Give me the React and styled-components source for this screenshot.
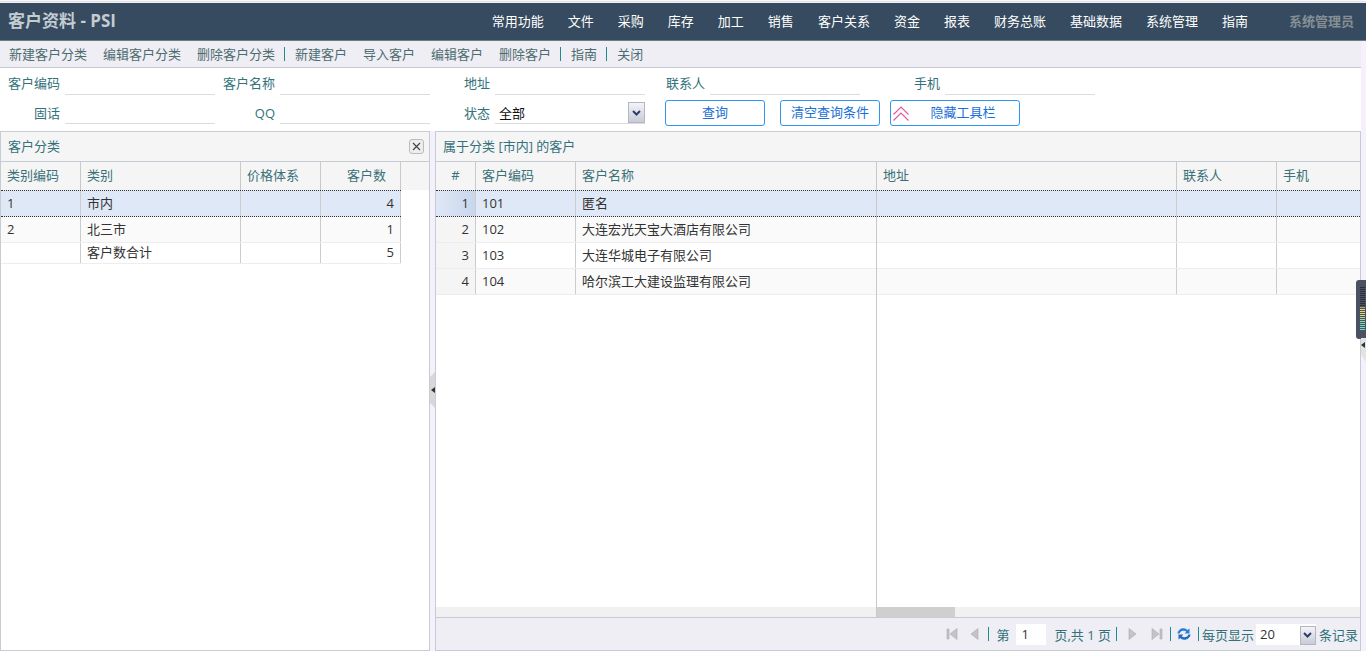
import React from "react";
import styled, { createGlobalStyle } from "styled-components";

const Global = createGlobalStyle`
  html, body { margin: 0; padding: 0; height: 100%; overflow: hidden; background: #f5f0fc; }
  body { font-family: "Open Sans", "Noto Sans CJK SC", "Noto Sans", sans-serif; font-size: 13px; color: #333; }
  * { box-sizing: border-box; }
`;

const Page = styled.div`
  position: relative; width: 1366px; height: 651px; display: flex; flex-direction: column; overflow: hidden;
`;
const TopStrip = styled.div`
  height: 3px; flex: none; background: #f4f4f6; border-top: 1px solid #f7f7f8; border-bottom: 1px solid #f0f0f2;
  box-shadow: inset 0 0 0 1px #e3e3e8;
`;
const Header = styled.header`
  height: 38px; flex: none; background: #364b60; display: flex; align-items: center; padding: 0 12px 2px 8px;
  border-bottom: 1px solid #6d7c8a;
`;
const Title = styled.div`
  font-size: 17px; font-weight: 700; color: #c4ccd2; flex: 1; line-height: 20px;
`;
const Menu = styled.nav`display: flex; gap: 24px; margin-right: 41px;`;
const MenuItem = styled.span`color: #fff; line-height: 18px; white-space: nowrap;`;
const UserName = styled.span`color: #868f96; font-weight: 700; white-space: nowrap;`;

const Content = styled.div`width: 1361px; flex: 1; display: flex; flex-direction: column; min-height: 0;`;

const Toolbar = styled.div`
  height: 27px; flex: none; background: #eeeef4; border-bottom: 1px solid #c8c8d0;
  display: flex; align-items: center; padding: 0 0 2px 9px;
`;
const ToolItem = styled.span`color: #4e6c70; white-space: nowrap; margin-right: ${p => (p.$tight ? 0 : 16)}px;`;
const ToolSep = styled.i`width: 1px; height: 14px; background: #1f8a8e; margin: 2px 10px 0 9px; flex: none;`;

const Form = styled.div`
  height: 63px; flex: none; background: #fff; display: flex; flex-direction: column; padding-top: 1px;
`;
const FormRow = styled.div`height: 29px; display: flex; align-items: stretch;`;
const Field = styled.div`display: flex; align-items: stretch;`;
const Label = styled.label`
  width: ${p => p.$w || 60}px; text-align: right; color: #33727a; line-height: ${p => p.$lh || 28}px; margin-right: 5px; white-space: nowrap;
`;
const TextBox = styled.div`
  width: 150px; height: 25px; border-bottom: 1px solid #dcdcdc; background: #fff; margin-top: 1px;
`;
const ComboBox = styled.div`
  width: 150px; height: 25px; margin-top: 1px; position: relative; display: flex; align-items: center;
  border-bottom: 1px solid #dcdcdc; padding: 2px 0 0 4px; color: #111;
`;
const ComboArrow = styled.span`
  position: absolute; right: 0; top: 3px; width: 17px; height: 21px; border: 1px solid #b4b6c8;
  background: linear-gradient(#f3f4f7, #c9cbd6); display: flex; align-items: center; justify-content: center;
`;
const Btn = styled.button`
  width: ${p => p.$w}px; height: 26px; margin: 2px 0 0 ${p => p.$ml}px; border: 1px solid #2f95f0; border-radius: 3px;
  background: #fff; color: #1a6fd8; font: inherit; padding: 0 0 3px ${p => p.$pl || 0}px; display: flex; align-items: center; justify-content: center;
  position: relative; align-self: flex-start;
`;
const BtnIcon = styled.svg`position: absolute; left: 2px; top: 5px;`;

const Panels = styled.div`flex: 1; display: flex; min-height: 0;`;
const Panel = styled.section`
  width: ${p => p.$w}px; flex: ${p => (p.$grow ? 1 : "none")}; display: flex; flex-direction: column; background: #fff;
  border: 1px solid #c5ccd3; min-width: 0; overflow: hidden;
`;
const PanelTitle = styled.div`
  height: 30px; flex: none; background: #f5f5f5; border-bottom: 1px solid #c5ccd3; display: flex; align-items: center;
  justify-content: space-between; padding: 0 5px 2px 7px; color: #33727a;
`;
const CloseBtn = styled.span`
  width: 15px; height: 15px; border: 1px solid #bbb; border-radius: 3px; background: #eee; margin-top: 2px;
  display: flex; align-items: center; justify-content: center;
`;
const Splitter = styled.div`width: 5px; flex: none; display: flex; align-items: center; padding-bottom: 2px;`;
const SplitHandle = styled.div`
  width: 5px; height: 36px; background: #d8d8d8; display: flex; align-items: center; justify-content: center;
  clip-path: polygon(0 5px, 100% 0, 100% 100%, 0 calc(100% - 5px)); color: #333;
`;

const GridArea = styled.div`flex: 1; display: flex; min-height: 0;`;
const Pane = styled.div`
  display: flex; flex-direction: column; width: ${p => (p.$w ? `${p.$w}px` : "auto")}; flex: ${p => (p.$w ? "none" : 1)};
  border-right: ${p => (p.$line ? "1px solid #c8c8c8" : "none")}; min-width: 0; overflow: hidden;
`;
const HeadRow = styled.div`
  display: flex; height: 28px; flex: none; background: #f5f5f5;
`;
const HeadCell = styled.div`
  width: ${p => p.$w}px; flex: ${p => (p.$grow ? 1 : "none")}; border-right: ${p => (p.$noline ? "none" : "1px solid #c6cacd")};
  padding: 0 ${p => p.$pr || 6}px 0 6px; line-height: 26px; color: #3a7177; text-align: ${p => p.$align || "left"}; white-space: nowrap; overflow: hidden;
`;
const Row = styled.div`
  display: flex; flex: none; height: ${p => (p.$sel ? 27 : p.$h || 26)}px; width: ${p => (p.$wd ? `${p.$wd}px` : "auto")};
  background: ${p => (p.$sel ? "#dfe8f6" : p.$alt ? "#fafafa" : "#fff")};
  border-bottom: ${p => (p.$sel ? "1px dotted #333" : "1px solid #ededed")};
  ${p => p.$sel && "border-top: 1px dotted #333;"}
`;
const Cell = styled.div`
  width: ${p => p.$w}px; flex: ${p => (p.$grow ? 1 : "none")}; border-right: ${p => (p.$noline ? "none" : "1px solid #cccccc")};
  padding: 0 6px; line-height: ${p => p.$lh || 25}px; color: #333; text-align: ${p => p.$align || "left"}; white-space: nowrap;
`;
const NumCell = styled(Cell)`
  background: ${p => (p.$sel ? "linear-gradient(90deg, #dfe8f6, #c8d6ec)" : "#f5f5f5")};
`;
const Spacer = styled.div`flex: 1;`;
const HScroll = styled.div`height: 10px; flex: none; background: #f1f1f1; display: flex;`;
const HThumb = styled.div`width: 78px; background: #cfcfcf;`;

const Pager = styled.div`
  height: 33px; flex: none; background: #eeeef4; border-top: 1px solid #c5ccd3; display: flex; align-items: center;
  justify-content: flex-end; padding-right: 2px; color: #33727a;
`;
const PagerIcon = styled.svg`flex: none; margin: ${p => p.$m || "0"};`;
const PagerSep = styled.i`width: 1px; height: 14px; background: #1f8a8e; flex: none; margin: ${p => p.$m || "0 7px"};`;
const PageInput = styled.div`
  width: 30px; height: 21px; background: #fff; color: #333; line-height: 21px; padding-left: 5px; margin: 0 8px 0 7px; flex: none;
`;
const SizeCombo = styled.div`
  width: 60px; height: 21px; background: #fff; position: relative; color: #333; line-height: 21px; padding-left: 4px; margin: 0 3px 0 2px; flex: none;
`;
const SizeArrow = styled(ComboArrow)`top: 2px; width: 16px; height: 19px;`;

const DockWidget = styled.div`
  position: absolute; left: 1356px; top: 280px; width: 10px; height: 59px; background: #4a5163; border-radius: 3px 0 0 3px;
  padding: 7px 0 0 4px; display: flex; flex-direction: column; gap: 1px;
`;
const Tick = styled.i`display: block; height: 1px; width: 5px; background: ${p => p.$c};`;
const DockTab = styled.div`
  position: absolute; left: 1361px; top: 338px; width: 5px; height: 24px; background: #e3e3e3; padding-top: 4px;
  clip-path: polygon(0 0, 100% 0, 100% 100%, 0 70%); display: flex; align-items: flex-start;
`;

const Chevron = () => (
  <svg width="9" height="6" viewBox="0 0 9 6"><path d="M1 1l3.5 3.5L8 1" fill="none" stroke="#2b3f6b" strokeWidth="2" /></svg>
);
const leftArrow = <svg width="4" height="6" viewBox="0 0 4 6"><path d="M4 0v6L0 3z" fill="#333" /></svg>;

const menu = ["常用功能", "文件", "采购", "库存", "加工", "销售", "客户关系", "资金", "报表", "财务总账", "基础数据", "系统管理", "指南"];

const catCols = [80, 160, 80, 80];
const lockCols = [40, 100, 300];
const freeCols = [300, 100];

const customers = [
  ["1", "101", "匿名"],
  ["2", "102", "大连宏光天宝大酒店有限公司"],
  ["3", "103", "大连华城电子有限公司"],
  ["4", "104", "哈尔滨工大建设监理有限公司"],
];

const dockTicks = [
  ...Array(10).fill("#2c303b"),
  "#b8a95e", "#e6d77a", "#e6d77a", "#e6d77a", "#dcd67f",
  "#b9d88a", "#9fd99a", "#8edba6", "#7ed8b0",
  "#6fdcc0", "#6ee0c8", "#6ee0c8",
];

const iconFill = { fill: "#c2c4c8", stroke: "#a9abb0", strokeWidth: ".6" };
const First = () => <PagerIcon width="14" height="14" viewBox="0 0 14 14"><path d="M2 2h2v10H2zM12 1.5v11L5 7z" {...iconFill} /></PagerIcon>;
const Prev = () => <PagerIcon $m="0 0 0 10px" width="12" height="14" viewBox="0 0 12 14"><path d="M9 1.5v11L2 7z" {...iconFill} /></PagerIcon>;
const Next = () => <PagerIcon width="12" height="14" viewBox="0 0 12 14"><path d="M3 1.5v11L10 7z" {...iconFill} /></PagerIcon>;
const Last = () => <PagerIcon $m="0 0 0 12px" width="14" height="14" viewBox="0 0 14 14"><path d="M10 2h2v10h-2zM2 1.5v11L9 7z" {...iconFill} /></PagerIcon>;
const Refresh = () => (
  <PagerIcon width="16" height="16" viewBox="0 0 16 16">
    <path d="M1.5 7.5C2 4 5 2 8 2.3c1.6.2 2.8.9 3.6 1.8L13.5 2.5V7.5H8.6l1.7-1.7C9.6 5 8.6 4.6 7.5 4.7 5.6 4.8 4 6 3.6 7.5z" fill="#2a7fd6" />
    <path d="M14.5 8.5C14 12 11 14 8 13.7c-1.6-.2-2.8-.9-3.6-1.8L2.5 13.5V8.5h4.9L5.7 10.2c.7.8 1.7 1.2 2.8 1.1 1.9-.1 3.5-1.3 3.9-2.8z" fill="#1f6cc0" />
  </PagerIcon>
);

export default function App() {
  return (
    <Page>
      <Global />
      <TopStrip />
      <Header>
        <Title>客户资料 - PSI</Title>
        <Menu>{menu.map(m => <MenuItem key={m}>{m}</MenuItem>)}</Menu>
        <UserName>系统管理员</UserName>
      </Header>
      <Content>
        <Toolbar>
          <ToolItem>新建客户分类</ToolItem>
          <ToolItem>编辑客户分类</ToolItem>
          <ToolItem $tight>删除客户分类</ToolItem>
          <ToolSep />
          <ToolItem>新建客户</ToolItem>
          <ToolItem>导入客户</ToolItem>
          <ToolItem>编辑客户</ToolItem>
          <ToolItem $tight>删除客户</ToolItem>
          <ToolSep />
          <ToolItem $tight>指南</ToolItem>
          <ToolSep />
          <ToolItem $tight>关闭</ToolItem>
        </Toolbar>
        <Form>
          <FormRow>
            <Field><Label>客户编码</Label><TextBox /></Field>
            <Field><Label>客户名称</Label><TextBox /></Field>
            <Field><Label>地址</Label><TextBox /></Field>
            <Field><Label>联系人</Label><TextBox /></Field>
            <Field><Label $w={80}>手机</Label><TextBox /></Field>
          </FormRow>
          <FormRow>
            <Field><Label $lh={30}>固话</Label><TextBox /></Field>
            <Field><Label $lh={30}>QQ</Label><TextBox /></Field>
            <Field>
              <Label $lh={30}>状态</Label>
              <ComboBox>全部<ComboArrow><Chevron /></ComboArrow></ComboBox>
            </Field>
            <Btn $w={100} $ml={20}>查询</Btn>
            <Btn $w={100} $ml={15}>清空查询条件</Btn>
            <Btn $w={130} $ml={10} $pl={16}>
              <BtnIcon width="16" height="15" viewBox="0 0 16 15">
                <path d="M.5 8.5L8 1l7.5 7.5M.5 14.5L8 7l7.5 7.5" fill="none" stroke="#e0559a" strokeWidth="1.1" />
              </BtnIcon>
              隐藏工具栏
            </Btn>
          </FormRow>
        </Form>
        <Panels>
          <Panel $w={430}>
            <PanelTitle>
              客户分类
              <CloseBtn>
                <svg width="9" height="9" viewBox="0 0 9 9"><path d="M1 1l7 7M8 1L1 8" stroke="#444" strokeWidth="1.2" /></svg>
              </CloseBtn>
            </PanelTitle>
            <HeadRow>
              <HeadCell $w={catCols[0]}>类别编码</HeadCell>
              <HeadCell $w={catCols[1]}>类别</HeadCell>
              <HeadCell $w={catCols[2]}>价格体系</HeadCell>
              <HeadCell $w={catCols[3]} $align="right" $pr={14}>客户数</HeadCell>
              <HeadCell $grow $noline />
            </HeadRow>
            <Row $sel $wd={400}>
              <Cell $w={80}>1</Cell><Cell $w={160}>市内</Cell><Cell $w={80} /><Cell $w={80} $align="right">4</Cell>
            </Row>
            <Row $alt $wd={400}>
              <Cell $w={80}>2</Cell><Cell $w={160}>北三市</Cell><Cell $w={80} /><Cell $w={80} $align="right">1</Cell>
            </Row>
            <Row $h={21} $wd={400}>
              <Cell $w={80} /><Cell $w={160} $lh={18}>客户数合计</Cell><Cell $w={80} /><Cell $w={80} $align="right" $lh={18}>5</Cell>
            </Row>
          </Panel>
          <Splitter><SplitHandle>{leftArrow}</SplitHandle></Splitter>
          <Panel $grow>
            <PanelTitle>属于分类 [市内] 的客户</PanelTitle>
            <GridArea>
              <Pane $w={441} $line>
                <HeadRow>
                  <HeadCell $w={lockCols[0]} $align="center">#</HeadCell>
                  <HeadCell $w={lockCols[1]}>客户编码</HeadCell>
                  <HeadCell $w={lockCols[2]} $noline>客户名称</HeadCell>
                </HeadRow>
                {customers.map((c, i) => (
                  <Row key={c[0]} $sel={i === 0} $alt={i % 2 === 1}>
                    <NumCell $w={lockCols[0]} $align="right" $sel={i === 0}>{c[0]}</NumCell>
                    <Cell $w={lockCols[1]}>{c[1]}</Cell>
                    <Cell $w={lockCols[2]} $noline>{c[2]}</Cell>
                  </Row>
                ))}
                <Spacer />
                <HScroll />
              </Pane>
              <Pane>
                <HeadRow>
                  <HeadCell $w={freeCols[0]}>地址</HeadCell>
                  <HeadCell $w={freeCols[1]}>联系人</HeadCell>
                  <HeadCell $grow $noline>手机</HeadCell>
                </HeadRow>
                {customers.map((c, i) => (
                  <Row key={c[0]} $sel={i === 0} $alt={i % 2 === 1}>
                    <Cell $w={freeCols[0]} />
                    <Cell $w={freeCols[1]} />
                    <Cell $grow $noline />
                  </Row>
                ))}
                <Spacer />
                <HScroll><HThumb /></HScroll>
              </Pane>
            </GridArea>
            <Pager>
              <First /><Prev />
              <PagerSep $m="0 7px 0 7px" />
              第
              <PageInput>1</PageInput>
              页,共 1 页
              <PagerSep $m="0 9px 0 5px" />
              <Next /><Last />
              <PagerSep $m="0 5px 0 6px" />
              <Refresh />
              <PagerSep $m="0 3px 0 6px" />
              每页显示
              <SizeCombo>20<SizeArrow><Chevron /></SizeArrow></SizeCombo>
              条记录
            </Pager>
          </Panel>
        </Panels>
      </Content>
      <DockWidget>
        {dockTicks.map((c, i) => <Tick key={i} $c={c} />)}
      </DockWidget>
      <DockTab>{leftArrow}</DockTab>
    </Page>
  );
}
